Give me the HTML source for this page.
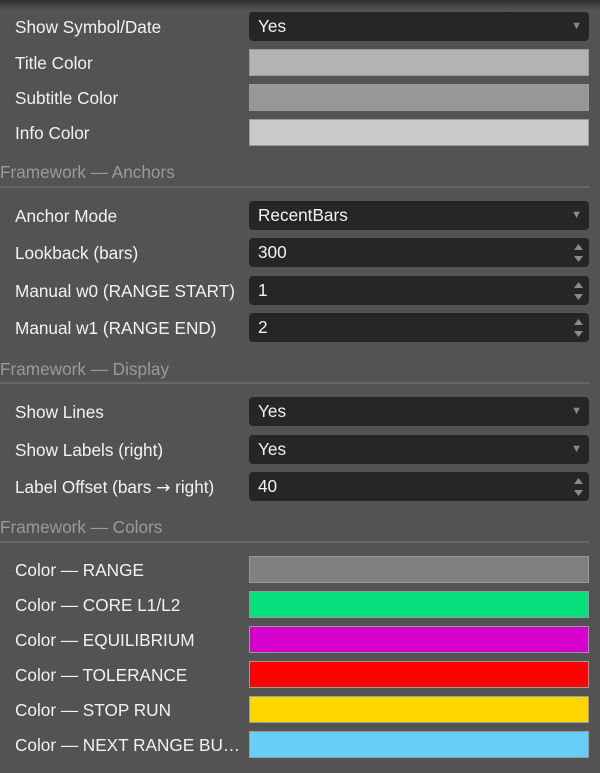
<!DOCTYPE html>
<html><head><meta charset="utf-8"><style>
html,body{margin:0;padding:0}
body{width:600px;height:773px;background:#535353;position:relative;overflow:hidden;font-family:"Liberation Sans",Arial,sans-serif;font-size:17.2px;color:#f2f2f2}
.top{position:absolute;left:0;top:0;width:600px;height:10px;background:linear-gradient(#2e2e2e,#535353)}
.l{position:absolute;left:15px;line-height:20px;white-space:nowrap}
.s{position:absolute;left:0;color:#9a9a9a;line-height:20px}
.hr{position:absolute;left:0;width:589px;height:2px;background:#666}
.in{position:absolute;left:249px;width:340px;height:29px;background:#262626;border-radius:4px;box-sizing:border-box;padding-left:9px;line-height:29px}
.ar{position:absolute;right:7px;top:0;font-size:11px;color:#8a8a8a}
.sp{position:absolute;right:5px;top:4px;width:11px;height:22px}
.sw{position:absolute;left:249px;width:340px;height:27px;box-sizing:border-box;border:1px solid #9a9a9a}
.ra{font-family:"DejaVu Sans",sans-serif;font-size:17px}
</style></head><body>
<div class="top"></div>

<div class="l" style="top:17px">Show Symbol/Date</div>
<div class="in" style="top:12px">Yes<span class="ar">▼</span></div>
<div class="l" style="top:53px">Title Color</div>
<div class="sw" style="top:49px;background:#b3b3b3"></div>
<div class="l" style="top:88px">Subtitle Color</div>
<div class="sw" style="top:84px;background:#979797"></div>
<div class="l" style="top:123px">Info Color</div>
<div class="sw" style="top:119px;background:#cacaca"></div>

<div class="s" style="top:162px">Framework — Anchors</div>
<div class="hr" style="top:186px"></div>

<div class="l" style="top:206px">Anchor Mode</div>
<div class="in" style="top:201px">RecentBars<span class="ar">▼</span></div>
<div class="l" style="top:243px">Lookback (bars)</div>
<div class="in" style="top:238px">300<svg class="sp" viewBox="0 0 11 22"><path d="M5.5 2L10 8H1z M5.5 20L10 14H1z" fill="#8a8a8a"/></svg></div>
<div class="l" style="top:281px">Manual w0 (RANGE START)</div>
<div class="in" style="top:276px">1<svg class="sp" viewBox="0 0 11 22"><path d="M5.5 2L10 8H1z M5.5 20L10 14H1z" fill="#8a8a8a"/></svg></div>
<div class="l" style="top:318px">Manual w1 (RANGE END)</div>
<div class="in" style="top:313px">2<svg class="sp" viewBox="0 0 11 22"><path d="M5.5 2L10 8H1z M5.5 20L10 14H1z" fill="#8a8a8a"/></svg></div>

<div class="s" style="top:359px">Framework — Display</div>
<div class="hr" style="top:382px"></div>

<div class="l" style="top:402px">Show Lines</div>
<div class="in" style="top:397px">Yes<span class="ar">▼</span></div>
<div class="l" style="top:440px">Show Labels (right)</div>
<div class="in" style="top:435px">Yes<span class="ar">▼</span></div>
<div class="l" style="top:477px">Label Offset (bars <span class="ra">→</span> right)</div>
<div class="in" style="top:472px">40<svg class="sp" viewBox="0 0 11 22"><path d="M5.5 2L10 8H1z M5.5 20L10 14H1z" fill="#8a8a8a"/></svg></div>

<div class="s" style="top:517px">Framework — Colors</div>
<div class="hr" style="top:541px"></div>

<div class="l" style="top:560px">Color — RANGE</div>
<div class="sw" style="top:556px;background:#808080"></div>
<div class="l" style="top:595px">Color — CORE L1/L2</div>
<div class="sw" style="top:591px;background:#08e07e"></div>
<div class="l" style="top:630px">Color — EQUILIBRIUM</div>
<div class="sw" style="top:626px;background:#d400cc"></div>
<div class="l" style="top:665px">Color — TOLERANCE</div>
<div class="sw" style="top:661px;background:#ff0000"></div>
<div class="l" style="top:700px">Color — STOP RUN</div>
<div class="sw" style="top:696px;background:#ffd600"></div>
<div class="l" style="top:735px">Color — NEXT RANGE BU…</div>
<div class="sw" style="top:731px;background:#66cff6"></div>
</body></html>
